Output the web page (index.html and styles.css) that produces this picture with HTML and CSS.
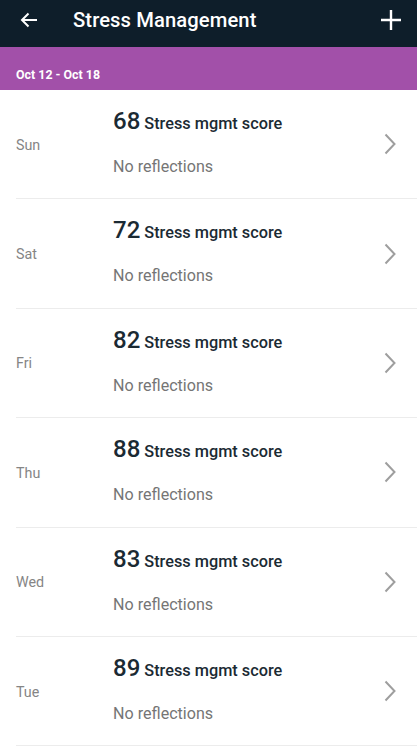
FILE: index.html
```html
<!DOCTYPE html>
<html>
<head>
<meta charset="utf-8">
<link rel="stylesheet" href="styles.css">
</head>
<body>
<div class="app">
  <header class="topbar">
    <svg class="back" width="18" height="16" viewBox="0 0 18 16"><path d="M17 8H2M8.5 1.5L2 8l6.5 6.5" fill="none" stroke="#fff" stroke-width="2"/></svg>
    <h1 class="title">Stress Management</h1>
    <svg class="plus" width="22" height="22" viewBox="0 0 22 22"><path d="M11 1v20M1 11h20" stroke="#fff" stroke-width="2.4"/></svg>
  </header>
  <div class="week">Oct 12 - Oct 18</div>
  <ul class="list">
    <li class="row"><span class="day">Sun</span><div class="info"><div class="score"><span class="num">68</span> Stress mgmt score</div><div class="refl">No reflections</div></div><svg class="chev" width="12" height="22" viewBox="0 0 12 22"><path d="M1.5 1.5L10.5 11L1.5 20.5" fill="none" stroke="#9e9e9e" stroke-width="2"/></svg></li>
    <li class="row"><span class="day">Sat</span><div class="info"><div class="score"><span class="num">72</span> Stress mgmt score</div><div class="refl">No reflections</div></div><svg class="chev" width="12" height="22" viewBox="0 0 12 22"><path d="M1.5 1.5L10.5 11L1.5 20.5" fill="none" stroke="#9e9e9e" stroke-width="2"/></svg></li>
    <li class="row"><span class="day">Fri</span><div class="info"><div class="score"><span class="num">82</span> Stress mgmt score</div><div class="refl">No reflections</div></div><svg class="chev" width="12" height="22" viewBox="0 0 12 22"><path d="M1.5 1.5L10.5 11L1.5 20.5" fill="none" stroke="#9e9e9e" stroke-width="2"/></svg></li>
    <li class="row"><span class="day">Thu</span><div class="info"><div class="score"><span class="num">88</span> Stress mgmt score</div><div class="refl">No reflections</div></div><svg class="chev" width="12" height="22" viewBox="0 0 12 22"><path d="M1.5 1.5L10.5 11L1.5 20.5" fill="none" stroke="#9e9e9e" stroke-width="2"/></svg></li>
    <li class="row"><span class="day">Wed</span><div class="info"><div class="score"><span class="num">83</span> Stress mgmt score</div><div class="refl">No reflections</div></div><svg class="chev" width="12" height="22" viewBox="0 0 12 22"><path d="M1.5 1.5L10.5 11L1.5 20.5" fill="none" stroke="#9e9e9e" stroke-width="2"/></svg></li>
    <li class="row"><span class="day">Tue</span><div class="info"><div class="score"><span class="num">89</span> Stress mgmt score</div><div class="refl">No reflections</div></div><svg class="chev" width="12" height="22" viewBox="0 0 12 22"><path d="M1.5 1.5L10.5 11L1.5 20.5" fill="none" stroke="#9e9e9e" stroke-width="2"/></svg></li>
  </ul>
</div>
</body>
</html>
```
FILE: styles.css
```css
html, body {
  margin: 0;
  padding: 0;
  background: #fff;
}
body {
  font-family: Roboto, "Noto Sans", "Liberation Sans", sans-serif;
  overflow: hidden;
}
.app {
  width: 417px;
  height: 750px;
  overflow: hidden;
}
.topbar {
  height: 47px;
  background: #0e1e2a;
  display: flex;
  align-items: center;
  padding: 0 15px 0 20px;
  box-sizing: border-box;
}
.back {
  margin-top: -7px;
  flex: none;
}
.title {
  margin: -7px 0 0 35px;
  font-size: 20.2px;
  font-weight: 500;
  color: #fff;
  flex: 1;
  letter-spacing: 0.1px;
}
.plus {
  margin-top: -8px;
  flex: none;
}
.week {
  height: 43px;
  background: #a250a9;
  color: #fff;
  font-size: 12.4px;
  font-weight: 700;
  padding: 20px 0 0 16px;
  box-sizing: border-box;
}
.list {
  list-style: none;
  margin: 0;
  padding: 0;
}
.row {
  margin-left: 16px;
  height: 109.4px;
  box-sizing: border-box;
  border-bottom: 1px solid #ececec;
  display: flex;
  align-items: center;
}
.day {
  width: 97px;
  flex: none;
  font-size: 14.3px;
  color: #858585;
  margin-top: 1px;
}
.info {
  flex: 1;
  align-self: flex-start;
  padding-top: 15px;
}
.score {
  height: 32px;
  line-height: 32px;
  font-size: 16.3px;
  font-weight: 500;
  color: #1b2a33;
}
.num {
  font-size: 24px;
  font-weight: 500;
}
.refl {
  margin-top: 18px;
  height: 24px;
  line-height: 24px;
  font-size: 16.1px;
  color: #757575;
}
.chev {
  flex: none;
  margin-right: 21px;
}
```
